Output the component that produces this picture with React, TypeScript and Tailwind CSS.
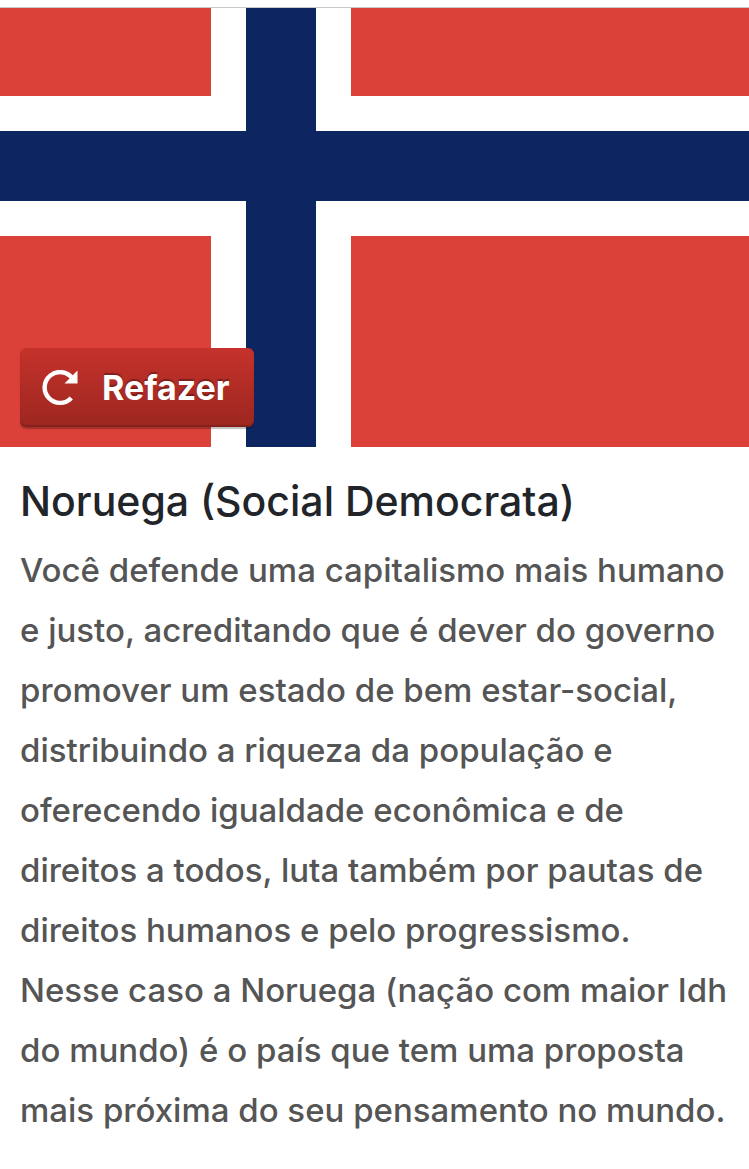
import { useState } from "react";

interface Result {
  title: string;
  paragraphs: string[];
}

const result: Result = {
  title: "Noruega (Social Democrata)",
  paragraphs: [
    "Você defende uma capitalismo mais humano e justo, acreditando que é dever do governo promover um estado de bem estar-social, distribuindo a riqueza da população e oferecendo igualdade econômica e de direitos a todos, luta também por pautas de direitos humanos e pelo progressismo.",
    "Nesse caso a Noruega (nação com maior Idh do mundo) é o país que tem uma proposta mais próxima do seu pensamento no mundo.",
  ],
};

function NorwayFlag() {
  return (
    <svg
      viewBox="0 0 749 439"
      role="img"
      aria-label="Bandeira da Noruega"
      shapeRendering="crispEdges"
      className="block w-full"
    >
      <rect width="749" height="439" fill="#dc4139" />
      <path d="M211 0h140v439H211zM0 88h749v140H0z" fill="#fff" />
      <path d="M246 0h70v439h-70zM0 123h749v70H0z" fill="#0d2662" />
    </svg>
  );
}

function RedoIcon() {
  return (
    <svg viewBox="0 0 36 36" className="size-9" aria-hidden="true">
      <path
        d="M29.3 28A15.4 15.4 0 1 1 30.5 8.4"
        fill="none"
        stroke="#fff"
        strokeWidth="4.4"
      />
      <path d="M35.5 0.5v13H22.5z" fill="#fff" />
    </svg>
  );
}

export default function App() {
  const [attempt, setAttempt] = useState(1);

  return (
    <main className="bg-white pt-[7px] pb-7 font-['Inter',sans-serif]">
      {/* Flag with the redo button over it */}
      <div className="relative border-t border-[#c8c8c8]">
        <NorwayFlag />
        <button
          type="button"
          onClick={() => setAttempt(attempt + 1)}
          className="absolute bottom-5 left-5 flex h-[79px] items-center gap-6 rounded-md bg-linear-to-b from-[#c5322b] to-[#9c2720] pr-6 pl-[22px] text-[34px] font-bold text-white shadow-[0_2px_1px_rgba(0,0,0,0.25),inset_0_-2px_1px_rgba(0,0,0,0.15)] text-shadow-[0_-2px_1px_rgba(0,0,0,0.3)]"
        >
          <RedoIcon />
          Refazer
        </button>
      </div>

      {/* Result */}
      <section key={attempt} className="pt-7 pr-4 pl-5">
        <h1 className="text-[41px] leading-[52px] font-medium text-[#212529]">
          {result.title}
        </h1>
        <div className="mt-[13px] text-[33px] leading-[60px] font-[550] text-[#555]">
          {result.paragraphs.map((text) => (
            <p key={text}>{text}</p>
          ))}
        </div>
      </section>
    </main>
  );
}
